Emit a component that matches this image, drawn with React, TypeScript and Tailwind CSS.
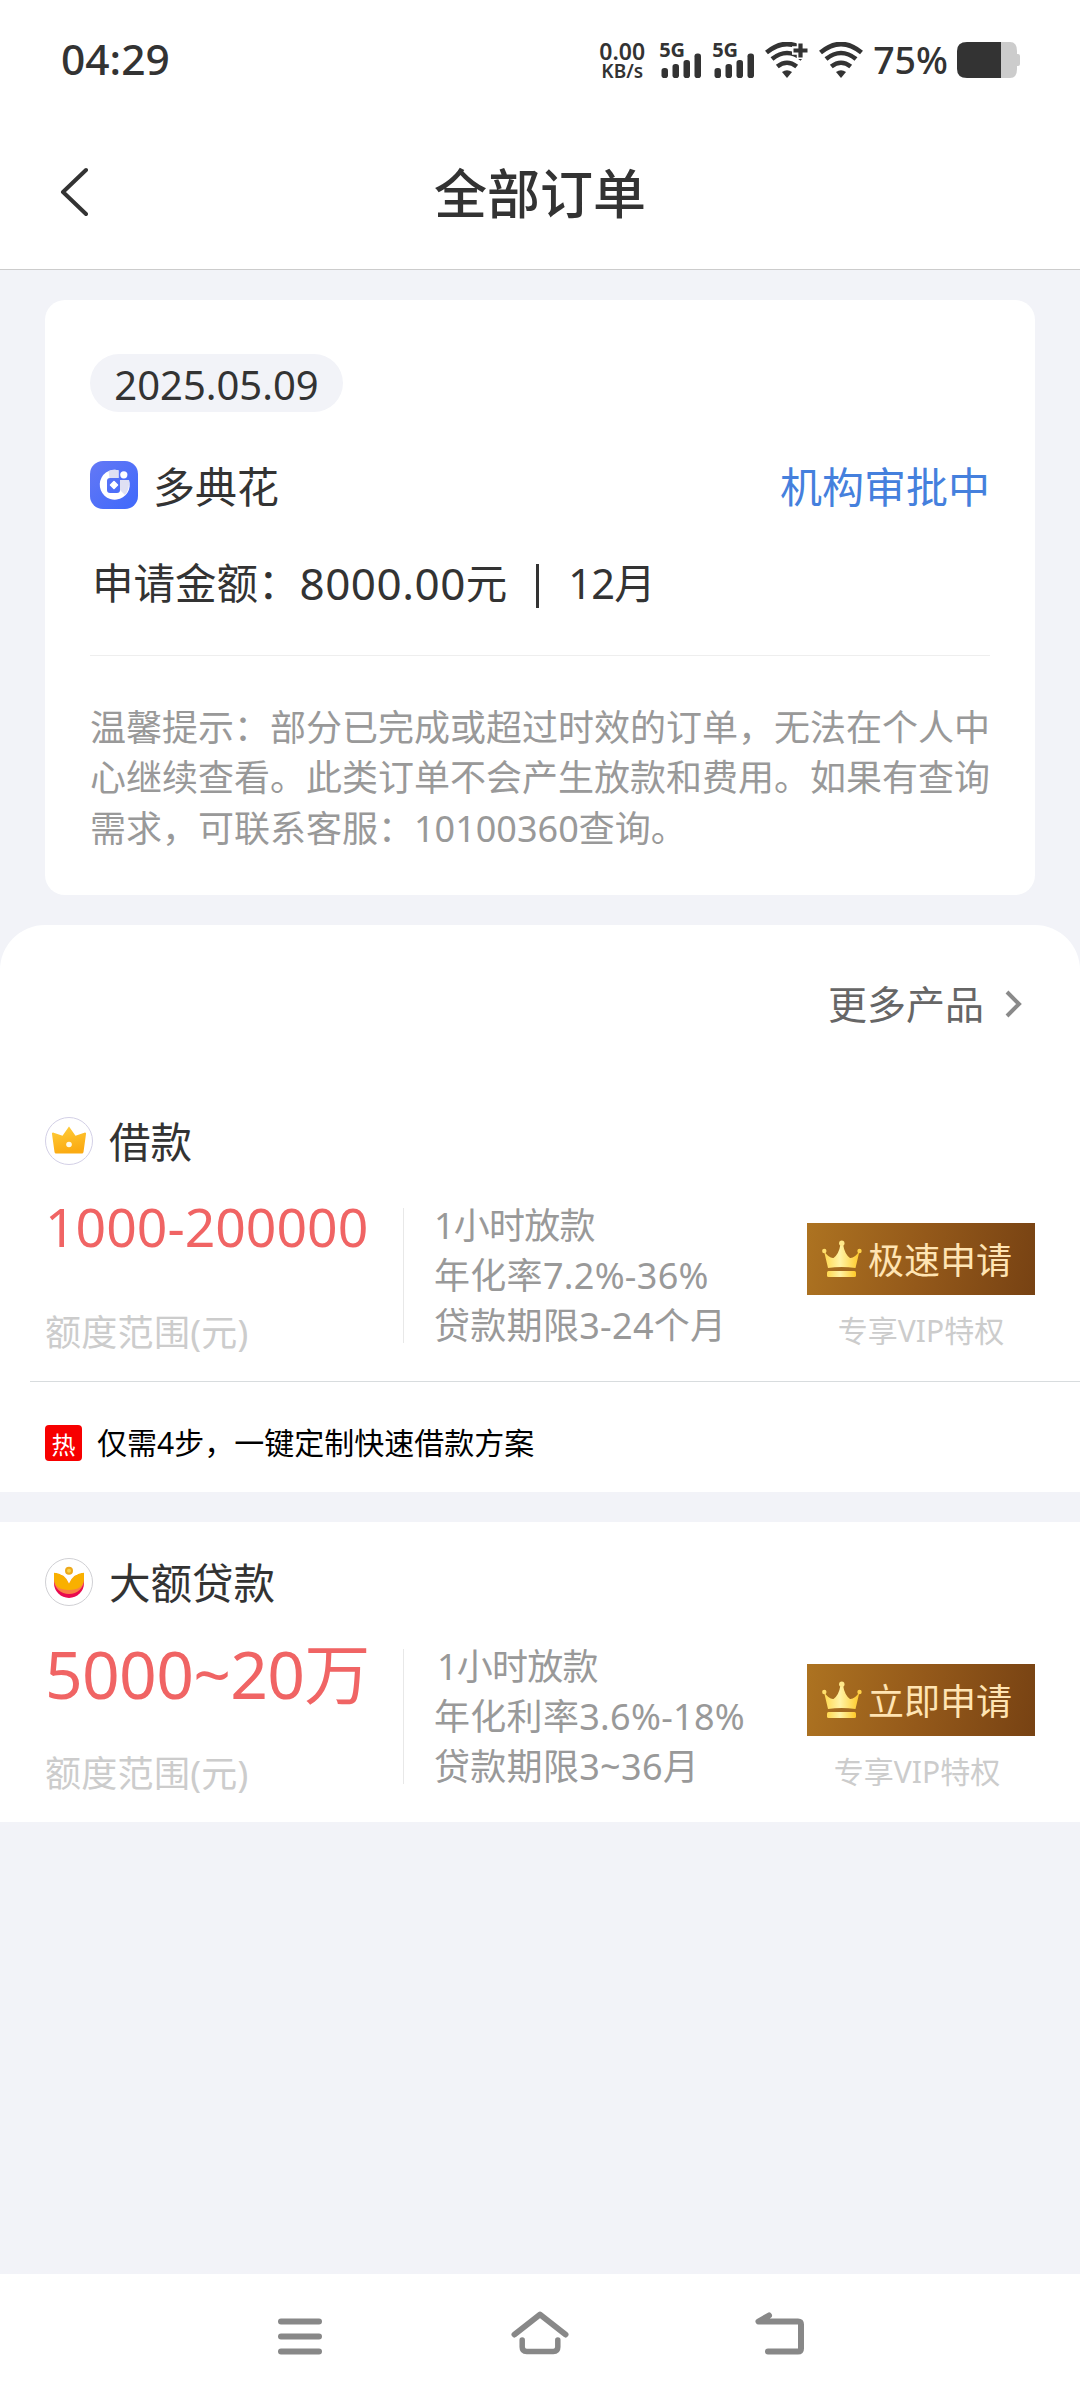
// Order list page: status bar, title bar, the current order and recommended loan products.
import type { ReactNode } from "react";

type Product = {
  name: string;
  icon: ReactNode;
  amount: string;
  amountClass: string;
  lines: string[];
  firstLineClass: string;
  action: string;
  vipClass: string;
};

function Signal() {
  return (
    <div className="relative h-9 w-[43px]">
      <span className="absolute -left-px -top-px text-[20px] font-bold leading-[18px]">5G</span>
      <svg className="absolute inset-0" width="43" height="36" viewBox="0 0 43 36" fill="currentColor">
        <rect x="1.5" y="26" width="6.5" height="10" rx="2.8" />
        <rect x="12.5" y="22" width="6.5" height="14" rx="2.8" />
        <rect x="23.5" y="18" width="6.5" height="18" rx="2.8" />
        <rect x="34.5" y="11.5" width="6.5" height="24.5" rx="2.8" />
      </svg>
    </div>
  );
}

function Wifi({ plus }: { plus?: boolean }) {
  return (
    <svg width="44" height="36" viewBox="0 0 44 36" fill="none" stroke="currentColor" strokeWidth="4.6">
      <path d="M1.5 10.5Q22-6.5 42.500 10.500" />
      <path d="M7 17Q22 5 37 17" />
      <path d="M12.300 24.500Q22 17 31.700 24.500" />
      <path d="M17 30Q22 26.500 27 30L22 36Z" fill="currentColor" stroke="none" />
      {plus && (
        <>
          <path d="M36 0v17M27 8.500H46" stroke="#fff" strokeWidth="8.500" />
          <path d="M35.500 1.500v14M28.500 8.500h14" strokeWidth="4.200" />
        </>
      )}
    </svg>
  );
}

function StatusBar() {
  return (
    <div className="flex h-[120px] items-center justify-between pl-[61px] pr-[60px] font-medium">
      <span className="pb-[2px] text-[42.500px] leading-none">04:29</span>
      <div className="flex items-center">
        <div className="mr-[15px] flex flex-col items-center font-semibold">
          <span className="text-[23px] leading-[22px]">0.00</span>
          <span className="text-[19px] leading-[19px]">KB/s</span>
        </div>
        <Signal />
        <div className="w-[10px]" />
        <Signal />
        <div className="w-[9px]" />
        <Wifi plus />
        <div className="w-[10px]" />
        <Wifi />
        <span className="ml-[10px] mr-[9px] text-[37.500px] leading-none">75%</span>
        <svg width="63" height="36" viewBox="0 0 63 36">
          <path d="M44 0h9q7 0 7 9v3h1q2 0 2 2v8q0 2-2 2h-1v3q0 9-7 9h-9z" fill="#ccc" />
          <path d="M44 0H10Q0 0 0 9v18q0 9 10 9h34z" fill="#333" />
        </svg>
      </div>
    </div>
  );
}

function AppLogo() {
  return (
    <svg width="48" height="48" viewBox="0 0 48 48">
      <defs>
        <linearGradient id="logo" x1="0" y1="0" x2="1" y2="1">
          <stop offset="0" stopColor="#6478f5" />
          <stop offset="1" stopColor="#3f69fb" />
        </linearGradient>
      </defs>
      <rect width="48" height="48" rx="13" fill="url(#logo)" />
      <path d="M28.500 9.200V17H20a3 3 0 0 0-3 3v9a3 3 0 0 0 3 3h7a3 3 0 0 0 3-3V19h9a15 15 0 1 1-10.500-9.800z" fill="#fff" />
      <path d="M28.500 9.200V17h-9l-1-7q5-2 10-.8zM30 19h9q1 9-4 15l-5-5z" fill="#dfe0f3" />
      <circle cx="33.800" cy="13.800" r="3.600" fill="#fff" />
      <path d="M24 20.500l3.500 3.500-3.500 3.500-3.500-3.500z" fill="#fff" stroke="#fff" strokeWidth="1.500" strokeLinejoin="round" />
    </svg>
  );
}

function CrownBadge() {
  return (
    <svg width="48" height="48" viewBox="0 0 48 48">
      <defs>
        <linearGradient id="crownBadge" x1="0" y1="0" x2=".3" y2="1">
          <stop offset="0" stopColor="#ffcf3d" />
          <stop offset="1" stopColor="#fbab12" />
        </linearGradient>
      </defs>
      <circle cx="24" cy="24" r="23.500" fill="#fff" stroke="#d3d0e6" />
      <path d="M24 9.500l6.500 9.300L40 15.500q1.500 0 1 1.500l-2.500 18q-.3 1.500-1.500 1.500H11q-1.200 0-1.500-1.500L7 17q-.5-1.500 1-1.500l9.500 3.300z" fill="url(#crownBadge)" />
      <circle cx="24" cy="27.500" r="2.800" fill="#fffbe8" />
    </svg>
  );
}

function LotusBadge() {
  return (
    <svg width="48" height="48" viewBox="0 0 48 48">
      <circle cx="24" cy="24" r="23.500" fill="#fff" stroke="#d0d0d4" />
      <path d="M9 20v5a15 15 0 0 0 30 0v-5z" fill="#e90a4f" />
      <path d="M9 17v5a15 14 0 0 0 30 0v-5z" fill="#fb7f45" />
      <path d="M9 14.500q11 1 15 11 4-10 15-11v6.500q-1 11-15 11T9 21z" fill="#f9b000" />
      <path d="M9 14.500q11 1 15 11 4-10 15-11V9H9z" fill="#fff" />
      <circle cx="24" cy="12.800" r="3" fill="#f8d34a" stroke="#eda81b" strokeWidth="2" />
    </svg>
  );
}

function Crown() {
  return (
    <svg width="40" height="38" viewBox="0 0 40 38">
      <defs>
        <linearGradient id="crown" x1="0" y1="0" x2="1" y2="0">
          <stop offset="0" stopColor="#ffd84e" />
          <stop offset=".45" stopColor="#fff3a6" />
          <stop offset="1" stopColor="#ffc926" />
        </linearGradient>
      </defs>
      <g fill="url(#crown)">
        <path d="M2 11q5 7.500 9.500 7Q17 14 18.500 4h2.500q1.500 10 7 14 4.500.5 9.500-7L33.500 28q-14-2-27.500 0z" />
        <rect x="5" y="31" width="29" height="6" rx="1.500" />
      </g>
      <circle cx="19.800" cy="3.200" r="2.700" fill="#ffe98a" />
      <circle cx="2.300" cy="11" r="2.200" fill="#ffdf6e" />
      <circle cx="37.500" cy="11" r="2.200" fill="#ffd24a" />
    </svg>
  );
}

function ProductItem({ p }: { p: Product }) {
  return (
    <div className="px-[45px]">
      <div className="flex h-12 items-center">
        {p.icon}
        <h3 className="ml-[16px] pt-[2px] text-[41.500px] leading-[48px]">{p.name}</h3>
      </div>
      <div className="mt-[43px] flex h-[135px]">
        <div className="flex w-[359px] shrink-0 flex-col justify-between whitespace-nowrap border-r border-[#e8e8e8]">
          <span className={p.amountClass}>{p.amount}</span>
          <span className="text-[36px] leading-[20px] tracking-[0.300px] text-[#ccc]">额度范围(元)</span>
        </div>
        <div className="-mt-[7px] ml-[30px] flex-1 whitespace-nowrap text-[36px] leading-[50px] text-[#999]">
          {p.lines.map((line, i) => (
            <p key={line} className={i === 0 ? p.firstLineClass : "tracking-[0.300px]"}>{line}</p>
          ))}
        </div>
        <div className="flex w-[228px] shrink-0 flex-col pt-[15px]">
          <button className="flex h-[72px] shrink-0 items-center bg-linear-[100deg] from-[#ad7321] via-[#94591a] to-[#774213] pl-[15px]">
            <Crown />
            <span className="ml-[6px] pt-[3px] text-[36px] leading-none text-[#ffe4b3]">{p.action}</span>
          </button>
          <span className={p.vipClass}>专享VIP特权</span>
        </div>
      </div>
    </div>
  );
}

const LOAN: Product = {
  name: "借款",
  icon: <CrownBadge />,
  amount: "1000-200000",
  amountClass: "text-[53.500px] leading-[37px] text-[#f06464]",
  lines: ["1小时放款", "年化率7.2%-36%", "贷款期限3-24个月"],
  firstLineClass: "tracking-[-0.800px]",
  action: "极速申请",
  vipClass: "mt-[21px] text-center text-[30px] leading-[30px] text-[#ccc]",
};

const BIG_LOAN: Product = {
  name: "大额贷款",
  icon: <LotusBadge />,
  amount: "5000~20万",
  amountClass: "text-[66px] leading-[48px] tracking-[-0.700px] text-[#f06464]",
  lines: ["1小时放款", "年化利率3.6%-18%", "贷款期限3~36月"],
  firstLineClass: "pl-[3px] tracking-[-0.800px]",
  action: "立即申请",
  vipClass: "mt-[21px] pr-2 text-center text-[30px] leading-[30px] text-[#ccc]",
};

export default function App() {
  return (
    <div className="flex h-[2400px] w-[1080px] flex-col bg-[#f2f3f8] font-['Noto_Sans','Noto_Sans_CJK_SC',sans-serif] text-[#333]" lang="zh-CN">
      <header className="h-[270px] border-b border-[#ccc] bg-white">
        <StatusBar />
        <div className="flex items-center px-[60px] pt-[40px]">
          <svg width="28" height="60" viewBox="0 0 28 60" fill="none" stroke="#333" strokeWidth="4" strokeLinecap="round" strokeLinejoin="round">
            <path d="M26 8L3 30l23 22" />
          </svg>
          <h1 className="flex-1 pr-7 pt-1 text-center text-[53px] font-medium leading-[60px]">全部订单</h1>
        </div>
      </header>

      {/* current order */}
      <section className="mx-[45px] mt-[30px] h-[595px] rounded-[20px] bg-white px-[45px] pt-[54px]">
        <div className="flex h-[58px] w-[253px] items-center justify-center rounded-full bg-[#f2f3f8] pt-1 text-[40px] leading-none">2025.05.09</div>
        <div className="mt-[49px] flex h-12 items-center text-[42px] leading-[48px]">
          <AppLogo />
          <span className="ml-[15px] pt-[4px]">多典花</span>
          <span className="ml-auto pt-[4px] text-[#4580dd]">机构审批中</span>
        </div>
        <div className="mt-[44px] flex h-[60px] items-center whitespace-nowrap text-[41.500px] leading-[60px]">
          <span className="pl-[2px]">申请金额：</span>
          <span className="text-[44px] tracking-[0.500px]">8000.00</span>
          <span>元</span>
          <span className="ml-[29px] mr-[29px] mt-[6px] h-[44px] w-[3px] bg-[#333]" />
          <span className="tracking-[-0.800px]">12月</span>
        </div>
        <div className="mt-[42px] h-px bg-[#eee]" />
        <p className="mt-[47px] text-[36px] leading-[50.400px] text-[#999]">
          温馨提示：部分已完成或超过时效的订单，无法在个人中心继续查看。此类订单不会产生放款和费用。如果有查询需求，可联系客服：10100360查询。
        </p>
      </section>

      {/* recommended products */}
      <section className="mt-[30px] h-[567px] rounded-t-[45px] bg-white">
        <div className="flex items-center justify-end pr-[58px] pt-[49px]">
          <span className="text-[39px] leading-[60px] text-[#666]">更多产品</span>
          <svg className="ml-[21px]" width="17" height="28" viewBox="0 0 17 28" fill="none" stroke="#8a8a8a" strokeWidth="4">
            <path d="M2 2l12 12L2 26" />
          </svg>
        </div>
        <div className="mt-[83px]">
          <ProductItem p={LOAN} />
        </div>
        <div className="ml-[30px] mt-[38px] h-px bg-[#d8dcde]" />
        <div className="mt-[43px] flex h-9 items-center pl-[45px]">
          <span className="flex h-9 w-[37px] items-center justify-center rounded-[4px] bg-[#f70000] pt-1 text-[24px] leading-none text-white">热</span>
          <span className="ml-[15px] text-[30px] leading-9 text-black">仅需4步，一键定制快速借款方案</span>
        </div>
      </section>
      <section className="mt-[30px] h-[300px] bg-white pt-[36px]">
        <ProductItem p={BIG_LOAN} />
      </section>

      {/* system navigation */}
      <nav className="mt-auto flex h-[126px] items-center justify-between bg-white px-[270px] pb-[7px] text-[#888]">
        <svg width="60" height="60" viewBox="0 0 60 60" stroke="currentColor" strokeWidth="6" strokeLinecap="round">
          <path d="M11 17.500h38M11 32.500h38M11 47.500h38" />
        </svg>
        <svg width="60" height="60" viewBox="0 0 60 60" fill="none" stroke="currentColor" strokeLinecap="round" strokeLinejoin="round">
          <path d="M4.500 30.500L30 10.500l25.500 20" strokeWidth="6" />
          <path d="M12.200 36v7q0 4.500 4.500 4.500h26.600q4.500 0 4.500-4.500v-7" strokeWidth="5.500" />
        </svg>
        <svg width="60" height="60" viewBox="0 0 60 60" fill="none" stroke="currentColor" strokeWidth="6" strokeLinecap="round" strokeLinejoin="round">
          <path d="M19 11.500L8.500 17.500H48q3 0 3 3v24q0 3-3 3H18" />
        </svg>
      </nav>
    </div>
  );
}
